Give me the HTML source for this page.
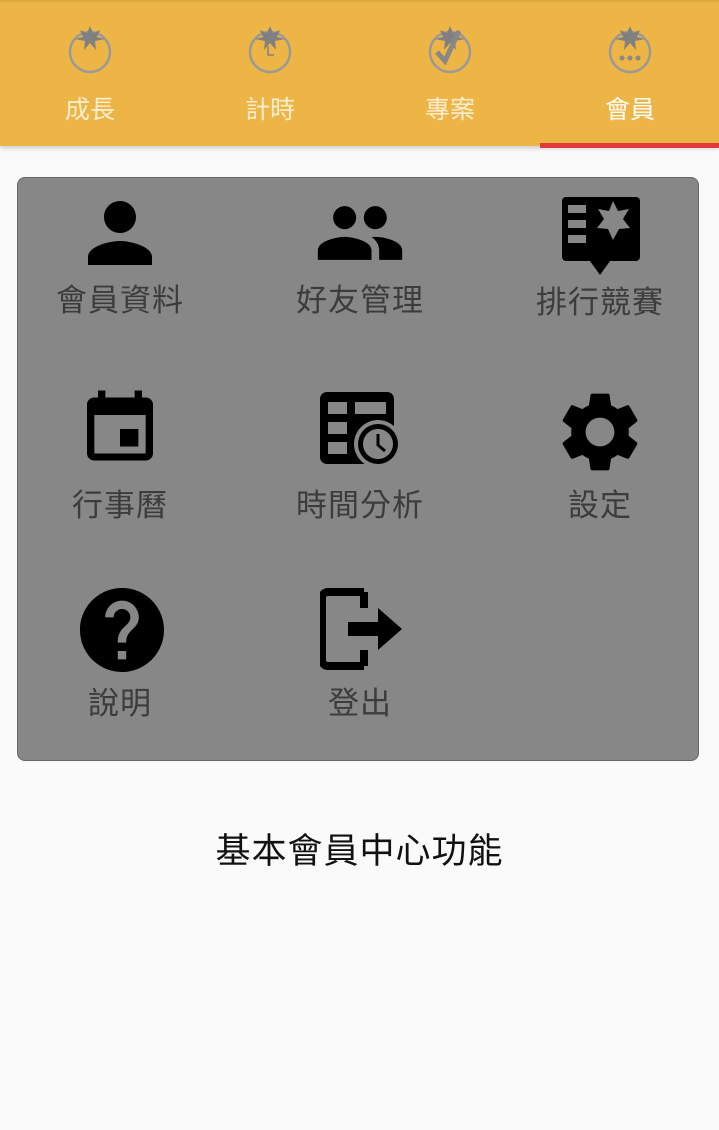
<!DOCTYPE html>
<html><head><meta charset="utf-8"><style>
body{margin:0;width:719px;height:1130px;background:#fafafa;font-family:"Liberation Sans","WenQuanYi Zen Hei","Noto Sans CJK TC",sans-serif;position:relative;overflow:hidden}
.hdr{position:absolute;left:0;top:0;width:719px;height:146px;background:#ecb545;border-top:2px solid #e0a93c;box-sizing:border-box;box-shadow:0 2px 5px rgba(0,0,0,.2)}
.tab{position:absolute;top:0;width:180px;height:146px;text-align:center}
.tab svg{position:absolute;left:67px;top:22px}
.tab span{position:absolute;left:0;right:0;top:88px;font-size:25px;color:#fbeed0}
.ul{position:absolute;left:540px;top:141px;width:179px;height:5px;background:#e03a3a}
.box{position:absolute;left:17px;top:177px;width:682px;height:584px;background:#878787;border:1px solid #666;border-radius:8px;box-sizing:border-box}
.it{position:absolute;width:240px;text-align:center}
.it svg{position:absolute;left:80px;top:0}
.it span{position:absolute;left:0;right:0;top:82px;font-size:31px;color:#3c3c3c;letter-spacing:1px}
.foot{position:absolute;left:0;right:0;top:823px;text-align:center;font-size:35px;letter-spacing:1px;color:#111}
</style></head><body>
<div class="hdr">
<div class="tab" style="left:0"><svg width="46" height="50" viewBox="0 0 46 50"><circle cx="23" cy="28" r="20" fill="none" stroke="#999" stroke-width="2.5"/><path d="M23 2l3 7 7-3-3 7 8 2-10 2 1 9-6-7-6 7 1-9-10-2 8-2-3-7 7 3z" fill="#808080"/></svg><span>成長</span></div>
<div class="tab" style="left:180px"><svg width="46" height="50" viewBox="0 0 46 50"><circle cx="23" cy="28" r="20" fill="none" stroke="#999" stroke-width="2.5"/><path d="M23 2l3 7 7-3-3 7 8 2-10 2 1 9-6-7-6 7 1-9-10-2 8-2-3-7 7 3z" fill="#808080"/><path d="M21 22v9h6" fill="none" stroke="#808080" stroke-width="1.5"/></svg><span>計時</span></div>
<div class="tab" style="left:360px"><svg width="46" height="50" viewBox="0 0 46 50"><circle cx="23" cy="28" r="20" fill="none" stroke="#999" stroke-width="2.5"/><path d="M23 2l3 7 7-3-3 7 8 2-10 2 1 9-6-7-6 7 1-9-10-2 8-2-3-7 7 3z" fill="#808080"/><path d="M10 28l8 9 14-30" fill="none" stroke="#888" stroke-width="5"/></svg><span>專案</span></div>
<div class="tab" style="left:540px"><svg width="46" height="50" viewBox="0 0 46 50"><circle cx="23" cy="28" r="20" fill="none" stroke="#999" stroke-width="2.5"/><path d="M23 2l3 7 7-3-3 7 8 2-10 2 1 9-6-7-6 7 1-9-10-2 8-2-3-7 7 3z" fill="#808080"/><circle cx="15" cy="34" r="2.5" fill="#888"/><circle cx="23" cy="34" r="2.5" fill="#888"/><circle cx="31" cy="34" r="2.5" fill="#888"/></svg><span style="color:#fff">會員</span></div>
<div class="ul"></div>
</div>
<div class="box"></div>
<div class="it" style="left:0;top:193px"><svg width="80" height="80" viewBox="0 0 24 24"><path d="M12 12c2.21 0 4-1.79 4-4s-1.79-4-4-4-4 1.79-4 4 1.79 4 4 4zm0 2c-2.67 0-8 1.34-8 4v2h16v-2c0-2.66-5.33-4-8-4z" transform="translate(12 12) scale(1.2) translate(-12 -12)"/></svg><span>會員資料</span></div>
<div class="it" style="left:240px;top:193px"><svg width="90" height="80" viewBox="0 0 24 24" style="left:75px"><path d="M16 11c1.66 0 2.99-1.34 2.99-3S17.66 5 16 5c-1.66 0-3 1.34-3 3s1.34 3 3 3zm-8 0c1.66 0 2.99-1.34 2.99-3S9.66 5 8 5C6.34 5 5 6.34 5 8s1.34 3 3 3zm0 2c-2.33 0-7 1.17-7 3.5V19h14v-2.5c0-2.33-4.67-3.5-7-3.5zm8 0c-.29 0-.62.02-.97.05 1.16.84 1.97 1.97 1.97 3.45V19h6v-2.5c0-2.33-4.67-3.5-7-3.5z" transform="translate(12 12) scale(1.15) translate(-12 -12)" /></svg><span>好友管理</span></div>
<div class="it" style="left:480px;top:195px"><svg width="80" height="80" viewBox="0 0 80 80"><path d="M2 6a4 4 0 0 1 4-4h70a4 4 0 0 1 4 4v56a4 4 0 0 1-4 4H50l-10 14-10-14v0H6a4 4 0 0 1-4-4z" fill="#000"/><rect x="8" y="10" width="18" height="8" fill="#878787"/><rect x="8" y="25" width="18" height="8" fill="#878787"/><rect x="8" y="40" width="18" height="8" fill="#878787"/><path d="M53 6l5 10 11-2-6 10 7 9-11 1-6 11-5-11-11-1 7-9-6-10 11 2z" fill="#878787"/><path d="M40 62l-6 10h12z" fill="#000"/></svg><span>排行競賽</span></div>
<div class="it" style="left:0;top:388px"><svg width="80" height="82" viewBox="0 0 24 24"><path d="M16 1v2H8V1H6v2H5c-1.11 0-2 .9-2 2v14c0 1.1.89 2 2 2h14c1.1 0 2-.9 2-2V5c0-1.1-.9-2-2-2h-1V1h-2zm3 18H5V8h14v11zM17 12h-5v5h5z" transform="translate(12 12) scale(1.1,1.05) translate(-12 -12)"/></svg><span style="top:92px">行事曆</span></div>
<div class="it" style="left:240px;top:388px"><svg width="80" height="80" viewBox="0 0 80 80"><rect x="0" y="4" width="74" height="72" rx="7" fill="#000"/><rect x="8" y="14" width="19" height="12" fill="#878787"/><rect x="35" y="14" width="31" height="12" fill="#878787"/><rect x="8" y="34" width="19" height="12" fill="#878787"/><rect x="8" y="54" width="19" height="12" fill="#878787"/><circle cx="58" cy="56" r="24" fill="#878787"/><circle cx="58" cy="56" r="20" fill="#000"/><circle cx="58" cy="56" r="15" fill="#878787"/><path d="M58 46v11l7 6" fill="none" stroke="#000" stroke-width="3"/></svg><span style="top:92px">時間分析</span></div>
<div class="it" style="left:480px;top:390px"><svg width="80" height="84" viewBox="2 2 20 20"><path d="M19.14 12.94c.04-.3.06-.61.06-.94 0-.32-.02-.64-.07-.94l2.03-1.58a.49.49 0 0 0 .12-.61l-1.92-3.32a.49.49 0 0 0-.59-.22l-2.39.96c-.5-.38-1.030-.7-1.62-.94l-.36-2.54a.48.48 0 0 0-.48-.41h-3.84c-.24 0-.43.17-.47.41l-.36 2.54c-.59.24-1.13.57-1.62.94l-2.39-.96a.48.48 0 0 0-.59.22L2.74 8.87c-.12.21-.08.47.12.61l2.03 1.58c-.05.3-.09.63-.09.94s.02.64.07.94l-2.03 1.58a.49.49 0 0 0-.12.61l1.92 3.32c.12.22.37.29.59.22l2.39-.96c.5.38 1.03.7 1.62.94l.36 2.54c.05.24.24.41.48.41h3.84c.24 0 .44-.17.47-.41l.36-2.54c.59-.24 1.13-.56 1.62-.94l2.39.96c.22.08.47 0 .59-.22l1.92-3.32c.12-.22.07-.47-.12-.61l-2.01-1.58zM12 15.6c-1.98 0-3.6-1.62-3.6-3.6s1.62-3.6 3.6-3.6 3.6 1.62 3.6 3.6-1.62 3.6-3.6 3.6z"/></svg><span style="top:90px">設定</span></div>
<div class="it" style="left:0;top:586px"><svg width="84" height="88" viewBox="2 2 20 20"><path d="M12 2C6.480 2 2 6.48 2 12s4.48 10 10 10 10-4.48 10-10S17.52 2 12 2zm1 17h-2v-2h2v2zm2.07-7.75l-.9.92C13.45 12.9 13 13.5 13 15h-2v-.5c0-1.1.45-2.1 1.17-2.83l1.24-1.26c.37-.36.59-.86.59-1.41 0-1.1-.9-2-2-2s-2 .9-2 2H8c0-2.21 1.79-4 4-4s4 1.79 4 4c0 .88-.36 1.68-.93 2.25z"/></svg><span style="top:92px">說明</span></div>
<div class="it" style="left:240px;top:588px"><svg width="84" height="84" viewBox="0 0 84 84"><path d="M44 4H8a6 6 0 0 0-6 6v62a6 6 0 0 0 6 6h36" fill="none" stroke="#000" stroke-width="8" stroke-linejoin="round"/><path d="M44 4v16M44 62v16" stroke="#000" stroke-width="8"/><path d="M28 34h30V20l24 21-24 21V48H28z" fill="#000"/></svg><span style="top:90px">登出</span></div>
<div class="foot">基本會員中心功能</div>
</body></html>
